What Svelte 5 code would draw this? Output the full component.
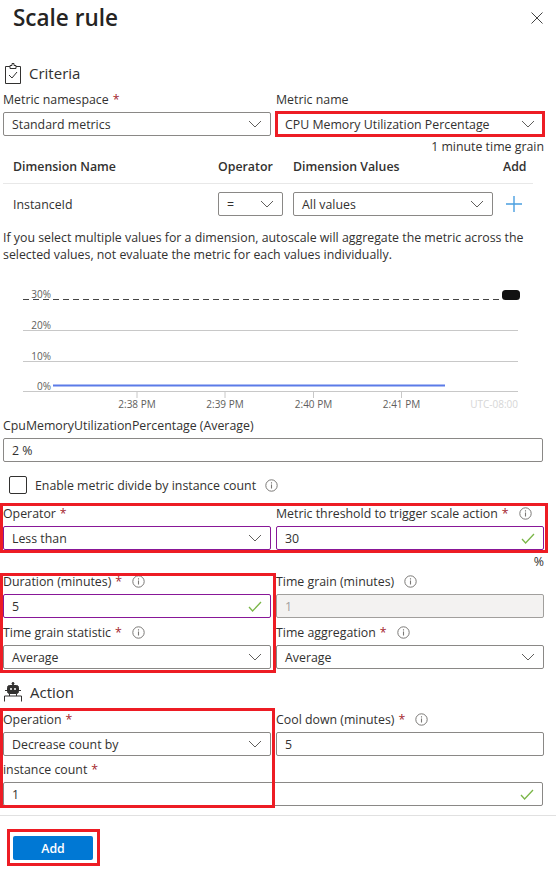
<script>
  const times = [
    { x: 137, label: "2:38 PM" },
    { x: 225, label: "2:39 PM" },
    { x: 313.5, label: "2:40 PM" },
    { x: 401.5, label: "2:41 PM" }
  ];
  const grid = [
    { y: 330.5, label: "20%" },
    { y: 361.5, label: "10%" },
    { y: 391.5, label: "0%" }
  ];
</script>

{#snippet chevron()}
  <svg class="chev" width="14" height="8" viewBox="0 0 14 8"><path d="M1 1l6 6 6-6" fill="none" stroke="#605e5c" stroke-width="1"/></svg>
{/snippet}

{#snippet check()}
  <svg class="check" width="14" height="11" viewBox="0 0 14 11"><path d="M1 6l3.6 4L13 1" fill="none" stroke="#7ab648" stroke-width="1.3"/></svg>
{/snippet}

{#snippet info()}
  <svg class="info" width="13" height="13" viewBox="0 0 13 13"><circle cx="6.5" cy="6.5" r="5.7" fill="none" stroke="#7a7876" stroke-width="1"/><path d="M6.5 5.6v4M6.5 3.2v1.2" stroke="#7a7876" stroke-width="1.1"/></svg>
{/snippet}

{#snippet label(text, required, hasInfo)}
  <div class="label">
    <span>{text}</span>
    {#if required}<span class="req">*</span>{/if}
    {#if hasInfo}{@render info()}{/if}
  </div>
{/snippet}

{#snippet select(value, cls = "")}
  <div class="control {cls}"><span>{value}</span>{@render chevron()}</div>
{/snippet}

{#snippet input(value, cls = "", ok = false)}
  <div class="control {cls}"><span>{value}</span>{#if ok}{@render check()}{/if}</div>
{/snippet}

<div class="page">
  <header class="head">
    <h1>Scale rule</h1>
    <svg width="12" height="12" viewBox="0 0 12 12"><path d="M.5.5l11 11M11.5.5l-11 11" stroke="#444" stroke-width="1"/></svg>
  </header>

  <h2 class="section criteria">
    <svg width="16" height="21" viewBox="0 0 16 21" fill="none" stroke="#323130" stroke-width="1">
      <path d="M5 3.5H.5v17h15v-17H11"/>
      <path d="M5 5.5V2.5h2V.5h2v2h2v3z"/>
      <path d="M4 12l3 3 5-6"/>
    </svg>
    Criteria
  </h2>

  <div class="cols first">
    <div>
      {@render label("Metric namespace", true)}
      {@render select("Standard metrics")}
    </div>
    <div>
      {@render label("Metric name")}
      {@render select("CPU Memory Utilization Percentage")}
    </div>
  </div>
  <div class="hint">1 minute time grain</div>

  <div class="dim dim-head">
    <b>Dimension Name</b><b>Operator</b><b>Dimension Values</b><b>Add</b>
  </div>
  <div class="dim dim-row">
    <span>InstanceId</span>
    {@render select("=")}
    {@render select("All values")}
    <svg class="plus" width="16" height="16" viewBox="0 0 16 16"><path d="M8 0v16M0 8h16" stroke="#4a9fe0" stroke-width="1.4"/></svg>
  </div>

  <p class="note">If you select multiple values for a dimension, autoscale will aggregate the metric across the selected values, not evaluate the metric for each values individually.</p>

  <svg class="chart" width="556" height="132" viewBox="0 280 556 132">
    <path d="M23 299.5h480" stroke="#444" stroke-dasharray="6 4" stroke-width="1"/>
    <text x="51" y="298" text-anchor="end">30%</text>
    {#each grid as g}
      <path d="M23 {g.y}H518" stroke="#c8c8c8"/>
      <text x="51" y={g.y - 2} text-anchor="end">{g.label}</text>
    {/each}
    <path d="M53 385.5H445" stroke="#5b7be8" stroke-width="2"/>
    {#each times as t}
      <path d="M{t.x} 392v6" stroke="#c8c8c8"/>
      <text x={t.x} y="408" text-anchor="middle">{t.label}</text>
    {/each}
    <text x="518" y="408" text-anchor="end" class="utc">UTC-08:00</text>
    <rect x="502" y="290" width="18" height="10" rx="3.5" fill="#111"/>
  </svg>

  <div class="wide metric">
    {@render label("CpuMemoryUtilizationPercentage (Average)")}
    {@render input("2 %")}
  </div>

  <div class="checkrow">
    <span class="box"></span>
    <span>Enable metric divide by instance count</span>
    {@render info()}
  </div>

  <div class="cols op">
    <div>
      {@render label("Operator", true)}
      {@render select("Less than", "purple")}
    </div>
    <div>
      {@render label("Metric threshold to trigger scale action", true, true)}
      {@render input("30", "purple", true)}
    </div>
  </div>
  <div class="unit">%</div>

  <div class="cols dur">
    <div>
      {@render label("Duration (minutes)", true, true)}
      {@render input("5", "purple", true)}
    </div>
    <div>
      {@render label("Time grain (minutes)", false, true)}
      {@render input("1", "disabled")}
    </div>
    <div>
      {@render label("Time grain statistic", true, true)}
      {@render select("Average")}
    </div>
    <div>
      {@render label("Time aggregation", true, true)}
      {@render select("Average")}
    </div>
  </div>

  <h2 class="section action">
    <svg width="18" height="20" viewBox="0 0 18 20" fill="none" stroke="#323130" stroke-width="1">
      <path d="M9 .5v3"/>
      <circle cx="9" cy="1.5" r="1" fill="#323130"/>
      <rect x="3.5" y="3.5" width="11" height="8" rx="2" fill="#323130"/>
      <path d="M6 7h2M10 7h2" stroke="#fff" stroke-width="1.6"/>
      <path d="M.5 19.5v-5.5h17v5.5M5.5 11.5v2.5M12.5 11.5v2.5M1 8.5h2M15 8.5h2"/>
    </svg>
    Action
  </h2>

  <div class="cols actions">
    <div>
      {@render label("Operation", true)}
      {@render select("Decrease count by")}
    </div>
    <div>
      {@render label("Cool down (minutes)", true, true)}
      {@render input("5")}
    </div>
  </div>
  <div class="wide count">
    {@render label("instance count", true)}
    {@render input("1", "", true)}
  </div>

  <footer class="foot">
    <button class="add">Add</button>
  </footer>

  <!-- annotation boxes drawn over the screenshot -->
  <i class="mark m1"></i>
  <i class="mark m2"></i>
  <i class="mark m3"></i>
  <i class="mark m4"></i>
  <i class="mark m5"></i>
</div>

<style>
:global(body){
  margin: 0;
  background: #fff;
}
.page{
  position: relative;
  width: 556px;
  height: 870px;
  overflow: hidden;
  font-family: "Open Sans", "Noto Sans", sans-serif;
  font-size: 12.35px;
  color: #323130;
}
.head{
  display: flex;
  justify-content: space-between;
  align-items: center;
  height: 35px;
  padding: 0 13px;
}
.head h1{
  margin: 0;
  font-size: 22.5px;
  font-weight: 600;
  color: #252423;
}
.section{
  display: flex;
  align-items: center;
  gap: 8px;
  margin: 0;
  padding-left: 5px;
  font-size: 15px;
  font-weight: 400;
  height: 22px;
}
.criteria{ margin-top: 27px; }
.action{ margin-top: 12px; padding-left: 4px; gap: 8px; }
.cols{
  display: grid;
  grid-template-columns: 268px 268px;
  column-gap: 5px;
  padding-left: 3px;
}
.first{ margin-top: 6px; }
.label{
  display: flex;
  align-items: center;
  gap: 4px;
  height: 19px;
  margin-bottom: 3px;
  white-space: nowrap;
}
.req{ color: #a4262c; }
.info{ margin-left: 6px; }
.control{
  display: flex;
  align-items: center;
  justify-content: space-between;
  box-sizing: border-box;
  height: 24px;
  padding: 0 8px;
  border: 1px solid #8a8886;
  border-radius: 2px;
  background: #fff;
}
.purple{ border-color: #881798; }
.disabled{
  background: #f3f2f1;
  border-color: #a19f9d;
  color: #a19f9d;
}
.hint{
  text-align: right;
  padding-right: 12px;
  height: 21px;
  line-height: 21px;
}
.dim{
  display: grid;
  grid-template-columns: 205px 75px 210px auto;
  margin-left: 3px;
  width: 530px;
  padding-left: 10px;
  box-sizing: border-box;
}
.dim-head{
  height: 27px;
  border-bottom: 1px solid #e8e8e8;
  line-height: 19px;
}
.dim-head b{ font-weight: 600; }
.dim-row{
  padding-top: 8px;
  align-items: center;
  grid-template-columns: 195px 65px 200px auto;
  column-gap: 10px;
}
.plus{ margin-left: 3px; }
.note{
  margin: 13px 0 0 3px;
  width: 540px;
  line-height: 17px;
}
.chart{
  display: block;
  margin-top: 16.5px;
}
.chart text{
  font-size: 10px;
  fill: #605e5c;
}
.chart text.utc{ fill: #d6d6d6; }
.wide{ padding: 0 13px 0 3px; }
.metric{ margin-top: 4.5px; }
.checkrow{
  display: flex;
  align-items: center;
  margin-top: 13px;
  padding-left: 9px;
  height: 20px;
}
.box{
  box-sizing: border-box;
  width: 18px;
  height: 18px;
  border: 1px solid #323130;
  border-radius: 2px;
  margin-right: 8px;
}
.checkrow .info{ margin-left: 9px; }
.op{ margin-top: 9px; }
.unit{
  text-align: right;
  padding-right: 12px;
  height: 22px;
  line-height: 24px;
}
.dur{ row-gap: 5px; }
.actions{ margin-top: 7px; }
.count{ margin-top: 4px; }
.foot{
  margin-top: 9px;
  border-top: 1px solid #e1e1e1;
  padding: 20px 0 0 13px;
}
.add{
  display: block;
  width: 80px;
  height: 24px;
  padding: 0;
  border: 0;
  border-radius: 2px;
  background: #0078d4;
  color: #fff;
  font: 600 12.35px "Open Sans", sans-serif;
}
.mark{
  position: absolute;
  box-sizing: border-box;
  border: 3px solid #ed1c24;
}
.m1{ left: 275px; top: 111px; width: 270px; height: 26px; }
.m2{ left: 0; top: 503px; width: 548px; height: 50px; }
.m3{ left: 0; top: 573px; width: 276px; height: 100px; }
.m4{ left: 0; top: 708px; width: 275px; height: 100px; }
.m5{ left: 7px; top: 829px; width: 93px; height: 37px; }
</style>
